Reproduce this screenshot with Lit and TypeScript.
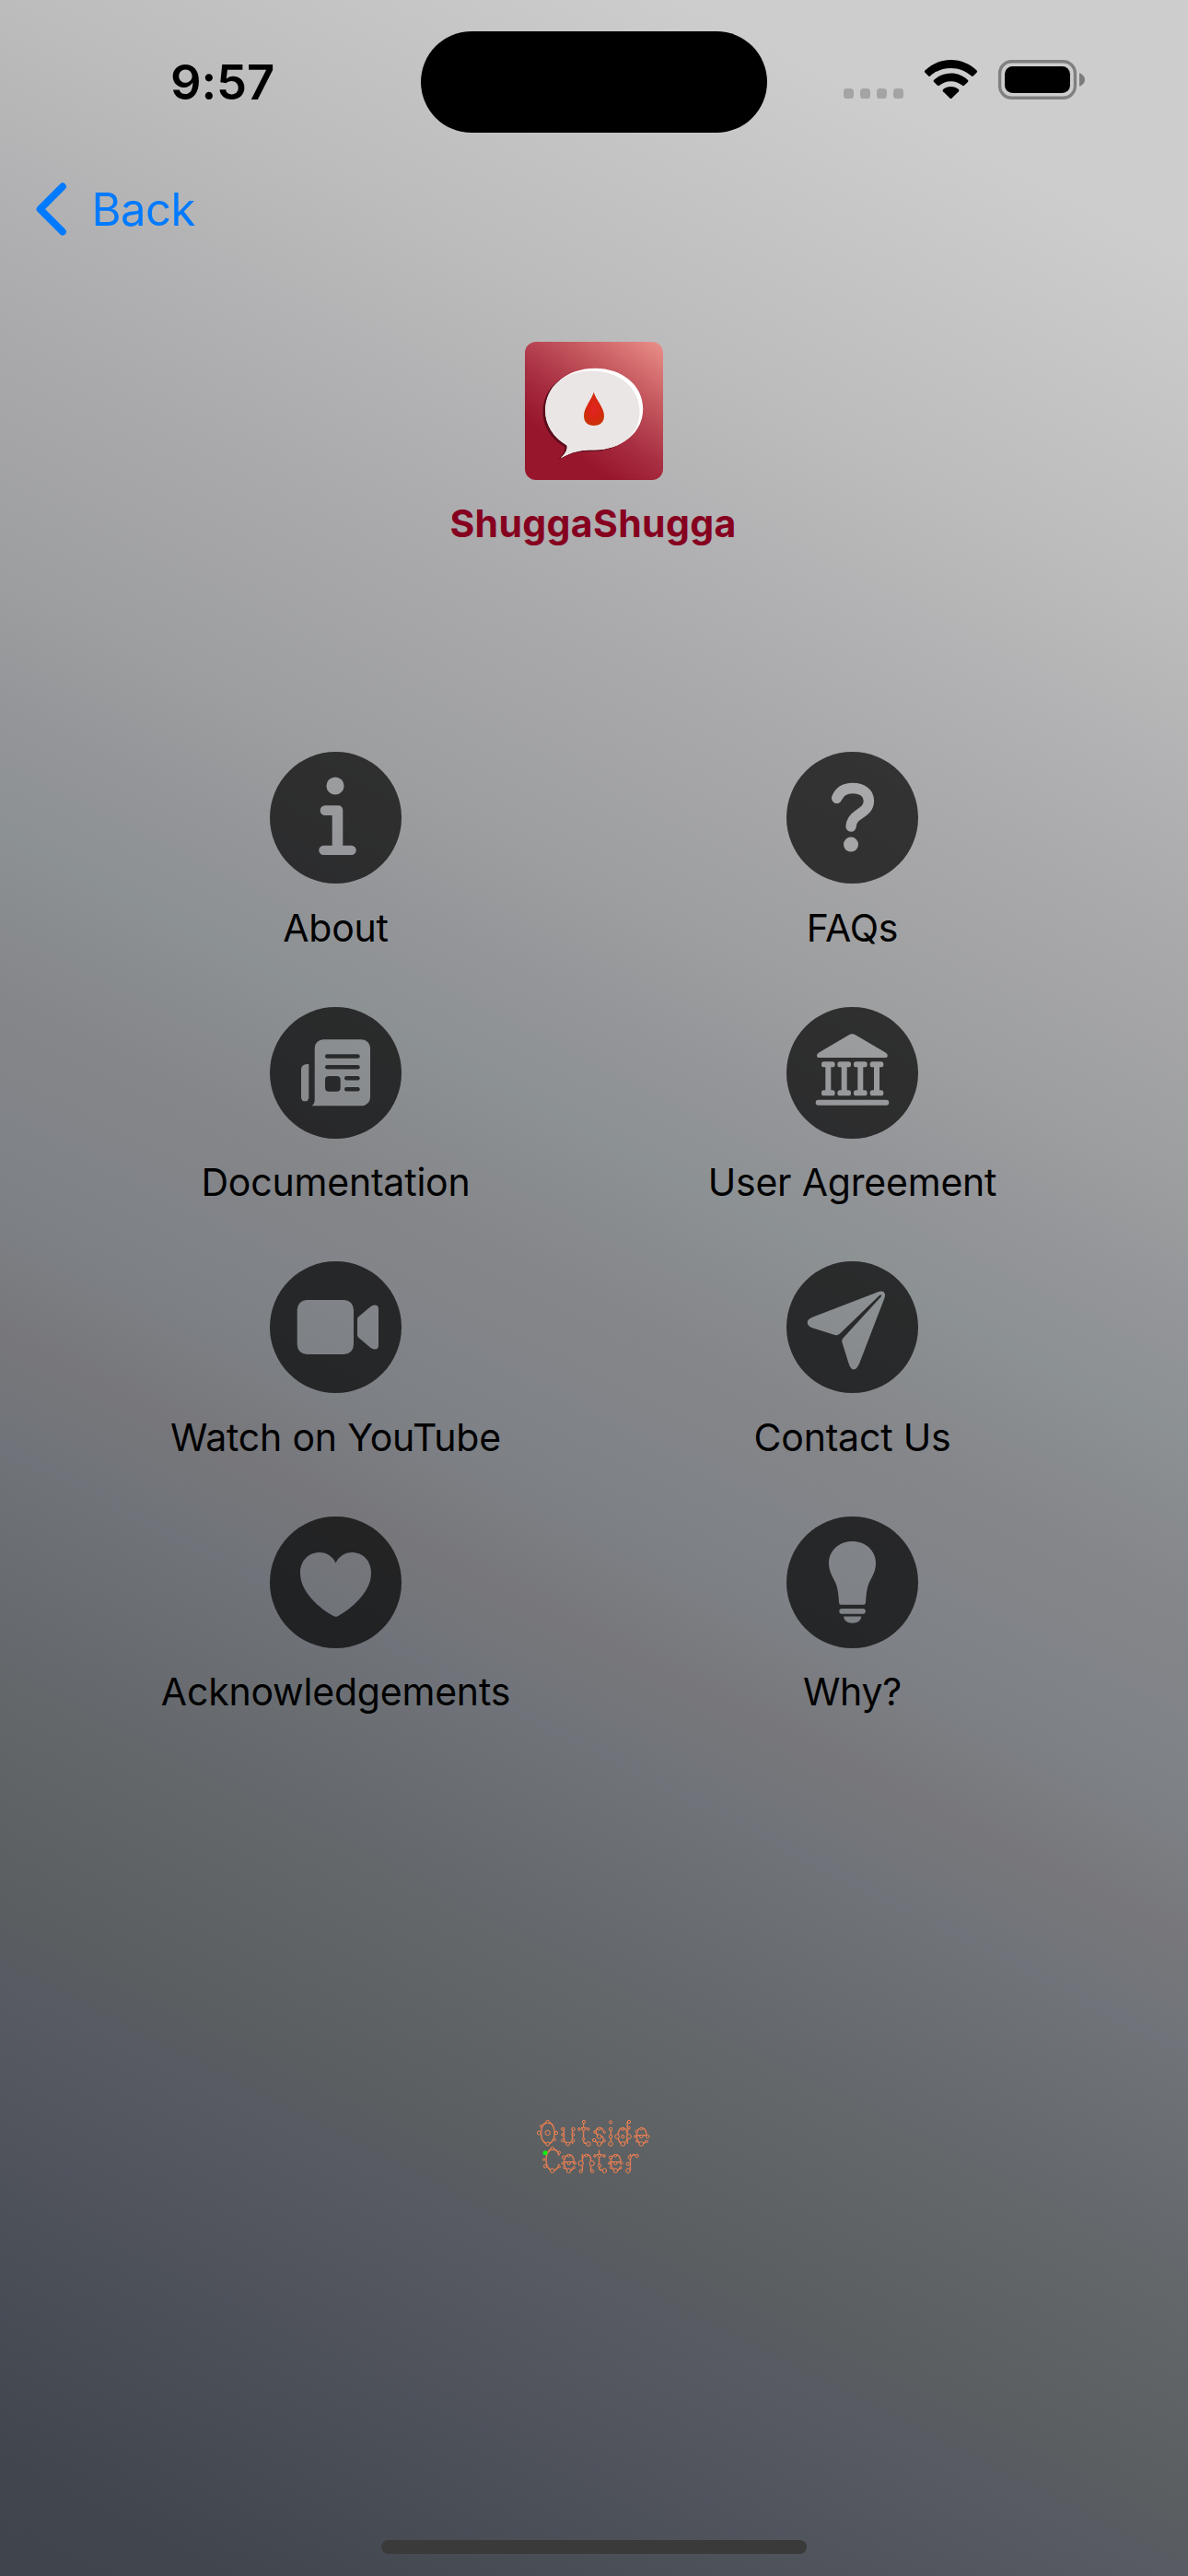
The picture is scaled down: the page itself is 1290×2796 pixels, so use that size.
import { LitElement, html, svg, css } from "lit";
import { customElement, property } from "lit/decorators.js";

/* Cut-out shapes, drawn in the 143-unit box of the round badge. */
const COLUMNS = [45.3, 62.7, 80.3, 98];

const GLYPHS: Record<string, unknown> = {
  info: svg`
    <circle cx="71" cy="37" r="9.6"/>
    <path d="M60 58.3H74Q79.3 58.3 79.3 63.8V101.7H88.6A5.1 5.1 0 0 1 88.6 112H58.4A5.1 5.1 0 0 1 58.4 101.7H67.7V69H60A5.3 5.3 0 0 1 60 58.3Z"/>`,
  question: svg`
    <path d="M54.6 50.4C57.6 43 63.8 39.5 72 39.5C82.4 39.5 89.4 45 89.4 53.3C89.4 60.6 84.6 64.2 79 67.8C73 71.7 70.3 75 70.1 81" fill="none" stroke="#000" stroke-width="11.4" stroke-linecap="round"/>
    <circle cx="70" cy="100.6" r="8"/>`,
  news: svg`
    <path d="M58 35.3H99.7A9.3 9.3 0 0 1 109 44.6V98A9.3 9.3 0 0 1 99.7 107.3H45.3Q48.7 105.6 48.7 101V44.6A9.3 9.3 0 0 1 58 35.3Z"/>
    <path d="M42.3 62V98.2A4.15 4.15 0 0 1 34 98.2V68.5Q34 62 40.5 62Z"/>
    <g fill="#fff">
      <rect x="60" y="51.3" width="37.7" height="4.4" rx="2.2"/>
      <rect x="60" y="63" width="37.7" height="4.4" rx="2.2"/>
      <rect x="60" y="75" width="16.7" height="16.7" rx="4"/>
      <rect x="81" y="75" width="16.7" height="4.4" rx="2.2"/>
      <rect x="81" y="87" width="16.7" height="4.4" rx="2.2"/>
    </g>`,
  building: svg`
    <path d="M67.9 30.3Q71.3 28.3 74.8 30.3L107.6 49.4Q109.8 50.7 109.8 52.4Q109.8 55 107 55H35.8Q33 55 33 52.4Q33 50.7 35.2 49.4Z"/>
    ${COLUMNS.map(
      (x) => svg`
        <rect x="${x - 7.3}" y="59.3" width="14.6" height="6" rx="2.6"/>
        <rect x="${x - 3}" y="61" width="6" height="33"/>
        <rect x="${x - 7.3}" y="90.3" width="14.6" height="6" rx="2.6"/>`
    )}
    <rect x="31.7" y="100.7" width="79.6" height="6" rx="3"/>`,
  video: svg`
    <rect x="29.7" y="42" width="61.3" height="59" rx="10.5"/>
    <path d="M95 63Q95 61.4 96.3 60.3L109.3 49.3Q111.6 47.5 114 47.5Q118 47.5 118 51.8V91.2Q118 95.5 114 95.5Q111.6 95.5 109.3 93.7L96.3 82.8Q95 81.7 95 80Z"/>`,
  plane: svg`
    <path d="M28 60.7L99.5 33.2Q103.6 31.6 105.8 33.6Q107.9 35.8 106.4 40L79.4 110.3Q76.6 117.4 73 117.4Q69.4 117.4 67.4 110.3L60.5 88.3Q59.6 85.3 61.6 83.2L102.6 38.6Q103.5 37 102.9 36.6Q102.3 36.2 101 37.1L57.8 78.8Q55.6 80.9 52.6 80L28 72.2Q22.7 70.4 22.7 66.5Q22.7 62.8 28 60.7Z"/>`,
  heart: svg`
    <path d="M71.6 50.4C75 43.2 81.6 39 89 39C101.2 39 110 48 110 61.2C110 79 94.5 96 74.6 107.8C72.4 109.1 70.8 109.1 68.6 107.8C48.5 96 33 79 33 61.2C33 48 42 39 54.2 39C61.6 39 68.2 43.2 71.6 50.4Z"/>`,
  bulb: svg`
    <path d="M71.5 26.9C86 26.9 97 37 97 50.5C97 62 90.8 67.5 88.6 75C86.6 82 86.4 87 86 93.6Q85.9 95.8 83.8 95.8H59.2Q57.1 95.8 57 93.6C56.6 87 56.4 82 54.4 75C52.2 67.5 46 62 46 50.5C46 37 57 26.9 71.5 26.9Z"/>
    <rect x="57.3" y="99.9" width="28.6" height="5.8" rx="2.9"/>
    <path d="M62 108.6H81.3C80.6 113.4 76.8 115.8 71.6 115.8C66.4 115.8 62.7 113.4 62 108.6Z"/>`,
};

@customElement("menu-tile")
export class MenuTile extends LitElement {
  @property() icon = "";
  @property() label = "";

  static styles = css`
    :host {
      display: flex;
      flex-direction: column;
      align-items: center;
    }
    .badge {
      display: block;
      width: 143px;
      height: 143px;
    }
    .label {
      margin-top: 22.5px;
      font-size: 41px;
      line-height: 50px;
      letter-spacing: -0.2px;
      white-space: nowrap;
      color: #000;
    }
  `;

  render() {
    return html`
      <svg class="badge" viewBox="0 0 143 143">
        <mask id="cut" maskUnits="userSpaceOnUse" x="0" y="0" width="143" height="143">
          <rect width="143" height="143" fill="#fff" />
          ${GLYPHS[this.icon]}
        </mask>
        <circle cx="71.5" cy="71.5" r="71.5" fill="#000" fill-opacity="0.7" mask="url(#cut)" />
      </svg>
      <span class="label">${this.label}</span>
    `;
  }
}

/* Nodes of the constellation wordmark: x, y, radius. */
const NODES: number[][] = [
  [104, 69, 5], [132, 105, 5], [127, 127, 3.5], [104, 141, 6], [76, 105, 6], [82, 83, 3.5], [104, 105, 8],
  [153, 93, 4.5], [153, 111, 4], [153, 130, 4.5], [170, 141, 6], [187, 130, 4.5], [187, 111, 4], [188, 93, 5],
  [222, 69, 5], [207, 93, 4], [221, 93, 5], [236, 93, 4], [221, 125, 4], [237, 141, 7],
  [272, 92, 4.5], [289, 103, 3.5], [258, 102, 4], [272, 117, 7], [255, 129, 5], [289, 131, 3.5], [272, 141, 7],
  [309, 70, 4.5], [309, 93, 5], [309, 117, 5], [309, 141, 7],
  [369, 69, 5], [369, 89, 4], [369, 117, 7], [349, 93, 4], [349, 117, 5], [330, 117, 7], [349, 141, 7],
  [409, 92, 4], [394, 100, 4], [430, 117, 5], [409, 117, 5], [389, 117, 3.5], [395, 132, 3.5], [409, 141, 7], [427, 133, 3.5],
  [119, 156, 5], [142, 169, 4], [92, 192, 3.5], [96, 214, 5], [119, 228, 7], [142, 215, 3.5],
  [173, 179, 4], [156, 185, 5], [192, 204, 4], [173, 204, 5], [154, 204, 4], [158, 218, 3.5], [173, 228, 7], [190, 218, 3.5],
  [230, 179, 4], [212, 204, 8], [212, 230, 5], [248, 204, 8], [249, 230, 5],
  [273, 179, 5], [258, 180, 4], [288, 180, 4], [273, 212, 5], [289, 228, 7],
  [325, 179, 4], [309, 185, 5], [344, 204, 4], [325, 204, 5], [306, 204, 4], [310, 218, 3.5], [325, 228, 7], [342, 218, 3.5],
  [395, 180, 5], [371, 185, 5], [365, 206, 5], [366, 228, 7],
];

const K = 0.78;
const xs = (list: number[]) => list.map((x) => (x / K).toFixed(1)).join(" ");

@customElement("app-root")
export class AppRoot extends LitElement {
  static styles = css`
    :host {
      display: flex;
      flex-direction: column;
      box-sizing: border-box;
      width: 1290px;
      height: 2796px;
      overflow: hidden;
      font-family: Inter, "Liberation Sans", sans-serif;
      background: linear-gradient(
        207deg,
        #cdcdcd 0%,
        #cdcdcd 8%,
        #bcbcbc 19.2%,
        #b2b2b4 24.5%,
        #a9a9ab 29.7%,
        #9d9e9f 37.2%,
        #949599 41.4%,
        #8c9193 45.1%,
        #85868a 50.4%,
        #7e8287 56.4%,
        #77777b 61%,
        #70747a 64.4%,
        #65696d 70.8%,
        #5b5f61 78.3%,
        #575a62 81.8%,
        #4c5059 88.8%,
        #41454d 96.5%,
        #40444d 100%
      );
    }
    .status {
      display: grid;
      grid-template-columns: 457px 376px 1fr;
      height: 178px;
    }
    .time {
      padding: 56px 0 0 185px;
      font-size: 52.5px;
      line-height: 66px;
      font-weight: 600;
      letter-spacing: -0.1px;
    }
    .island {
      margin-top: 34px;
      height: 110px;
      border-radius: 55px;
      background: #000;
    }
    .signals {
      display: flex;
      align-items: flex-start;
      padding: 64px 0 0 83px;
    }
    .nav {
      display: flex;
      align-items: center;
      height: 98px;
      padding-left: 35px;
      color: #007aff;
    }
    .back {
      margin-left: 22.5px;
      padding-top: 1px;
      font-size: 49px;
      line-height: 60px;
      letter-spacing: -0.5px;
    }
    .brand {
      display: flex;
      flex-direction: column;
      align-items: center;
      padding-top: 95px;
      height: 445px;
      box-sizing: border-box;
      margin-bottom: 95px;
    }
    .logo {
      display: block;
      width: 150px;
      height: 150px;
      border-radius: 12px;
    }
    .title {
      margin-top: 22px;
      margin-right: 2px;
      font-size: 41px;
      line-height: 50px;
      font-weight: 700;
      letter-spacing: 0.35px;
      color: #86001f;
    }
    .menu {
      display: grid;
      grid-template-columns: 561px 561px;
      grid-auto-rows: 276.67px;
      justify-content: center;
    }
    .spacer {
      flex: 1;
    }
    .wordmark {
      display: block;
      width: 170px;
      height: 100px;
      margin: 0 auto 377px 560px;
    }
    .home {
      width: 462px;
      height: 15px;
      margin: 0 auto 24px;
      border-radius: 7.5px;
      background: #3a3a3a;
    }
  `;

  private items = [
    { icon: "info", label: "About" },
    { icon: "question", label: "FAQs" },
    { icon: "news", label: "Documentation" },
    { icon: "building", label: "User Agreement" },
    { icon: "video", label: "Watch on YouTube" },
    { icon: "plane", label: "Contact Us" },
    { icon: "heart", label: "Acknowledgements" },
    { icon: "bulb", label: "Why?" },
  ];

  private renderStatus() {
    return html`
      <div class="status">
        <div class="time">9:57</div>
        <div class="island"></div>
        <div class="signals">
          <svg width="264" height="46" viewBox="916 64 264 46">
            <g fill="#a4a4a4">
              ${[916, 934, 952, 970].map((x) => svg`<rect x="${x}" y="96" width="11" height="11" rx="3.6"/>`)}
            </g>
            <path d="M1032.5 65C1043.6 65 1053.7 69.5 1060.6 76.5Q1061.6 77.6 1060.6 78.7L1056.8 82.5Q1055.9 83.4 1054.9 82.5C1049 77 1041.2 73.9 1032.5 73.9C1023.8 73.9 1016 77 1010.1 82.5Q1009.1 83.4 1008.2 82.5L1004.4 78.7Q1003.4 77.6 1004.4 76.5C1011.3 69.5 1021.4 65 1032.5 65Z"/>
            <path d="M1032.5 79.6C1039.6 79.6 1046 82.3 1050.8 86.8Q1051.9 87.9 1050.9 88.9L1047 92.8Q1046 93.7 1045 92.8C1041.7 89.9 1037.3 88.2 1032.5 88.2C1027.7 88.2 1023.3 89.9 1020 92.8Q1019 93.7 1018 92.8L1014.1 88.9Q1013.1 87.9 1014.2 86.8C1019 82.3 1025.4 79.6 1032.5 79.6Z"/>
            <path d="M1032.5 94C1035.7 94 1038.7 95.2 1040.9 97.1Q1042 98.2 1041 99.2L1033.6 106.5Q1032.5 107.5 1031.4 106.5L1024 99.2Q1023 98.2 1024.1 97.1C1026.3 95.2 1029.3 94 1032.5 94Z"/>
            <rect x="1085.6" y="66.7" width="81.8" height="39.6" rx="13" fill="none" stroke="#808080" stroke-width="3.4"/>
            <rect x="1091" y="72" width="71" height="29" rx="8.5"/>
            <path d="M1172 79.2C1175.6 80.6 1178 83.2 1178 86.5C1178 89.8 1175.6 92.4 1172 93.8Z" fill="#7c7c7c"/>
          </svg>
        </div>
      </div>
    `;
  }

  private renderLogo() {
    return html`
      <svg class="logo" viewBox="0 0 150 150">
        <defs>
          <linearGradient id="red" gradientUnits="userSpaceOnUse" x1="142" y1="0" x2="55" y2="122">
            <stop offset="0" stop-color="#e88c86" />
            <stop offset="0.35" stop-color="#c65a60" />
            <stop offset="0.7" stop-color="#a82f42" />
            <stop offset="1" stop-color="#98162b" />
          </linearGradient>
          <radialGradient id="drop" cx="0.5" cy="0.5" r="0.6">
            <stop offset="0" stop-color="#e02424" />
            <stop offset="0.5" stop-color="#d92612" />
            <stop offset="1" stop-color="#c23a04" />
          </radialGradient>
          <path id="bubble" d="M75 29.5C104.5 29.5 127 48 127 73.5C127 99 104.5 117.5 75 117.5C62 117.5 51 119 38.5 126.5C43.5 121.5 46.5 117.5 45.5 112.5C31 104 22 90.5 22 74.5C22 48 45 29.5 75 29.5Z" />
          <clipPath id="inside"><use href="#bubble" /></clipPath>
        </defs>
        <rect width="150" height="150" fill="url(#red)" />
        <use href="#bubble" x="-2.6" y="1.4" fill="#5c0d1b" />
        <use href="#bubble" x="1.2" y="-0.8" fill="#fff" />
        <g clip-path="url(#inside)">
          <use href="#bubble" fill="#fff" />
          <use href="#bubble" x="-2.4" y="2" fill="#ebe6e6" />
        </g>
        <path d="M74.7 54.8C77.5 63.5 86 71.5 86 80.5C86 87 81.5 91 74.9 91C68.3 91 64 87 64 80.5C64 71.5 72 63.5 74.7 54.8Z" fill="url(#drop)" />
      </svg>
    `;
  }

  render() {
    return html`
      ${this.renderStatus()}
      <div class="nav">
        <svg width="42" height="62" viewBox="36 195.5 42 62">
          <path d="M69 202L44.5 226.5L69 251" fill="none" stroke="#007aff" stroke-width="7.8" stroke-linecap="round" stroke-linejoin="round" />
        </svg>
        <span class="back">Back</span>
      </div>
      <div class="brand">
        ${this.renderLogo()}
        <span class="title">ShuggaShugga</span>
      </div>
      <div class="menu">
        ${this.items.map((i) => html`<menu-tile .icon=${i.icon} .label=${i.label}></menu-tile>`)}
      </div>
      <div class="spacer"></div>
      <svg class="wordmark" viewBox="0 0 510 300">
        <text transform="scale(${K} 1)" fill="#f0804f" font-family="Inter" font-weight="250" font-size="98" text-anchor="middle"><tspan x="${xs([104, 170, 222, 272, 309, 349, 409])}" y="142">Outside</tspan><tspan x="${xs([119, 173, 230, 273, 325, 377])}" y="229">Center</tspan></text>
        <g fill="#5e6266" stroke="#f4814f" stroke-width="3">
          ${NODES.map(([x, y, r]) => svg`<circle cx="${x}" cy="${y}" r="${r}"/>`)}
        </g>
        <circle cx="96" cy="170" r="7.5" fill="#0cf20c" />
      </svg>
      <div class="home"></div>
    `;
  }
}
